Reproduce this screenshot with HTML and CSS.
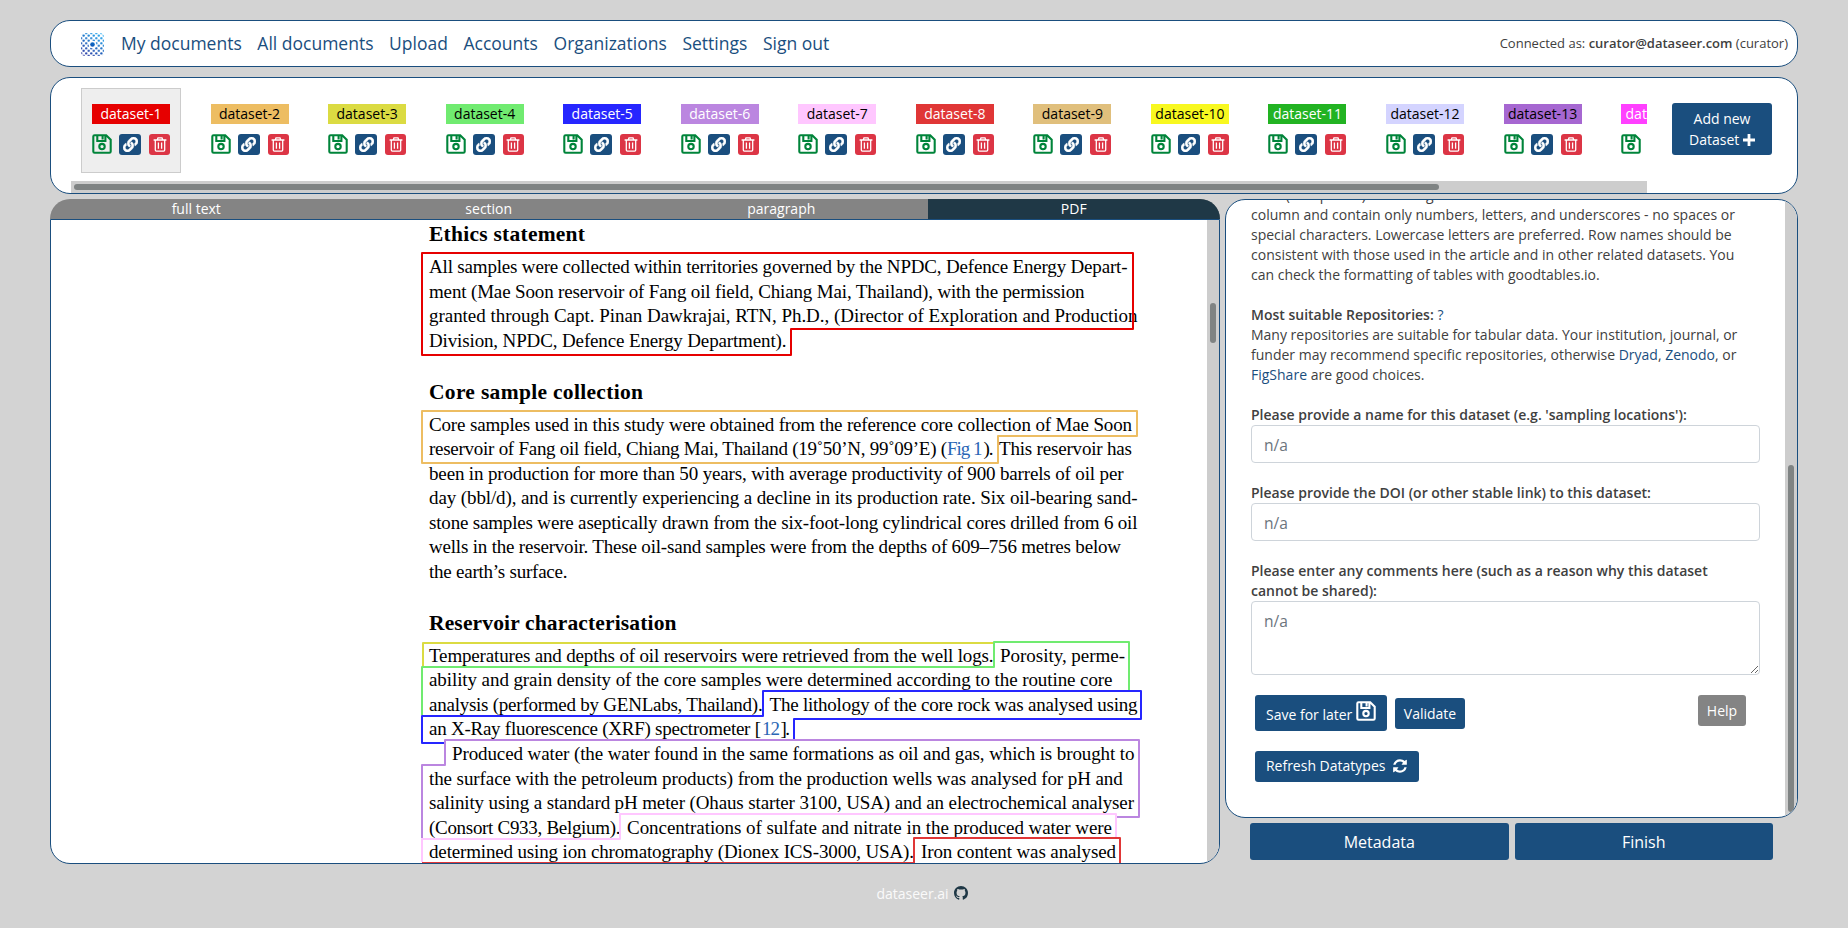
FILE: index.html
```html
<!DOCTYPE html>
<html lang="en">
<head>
<meta charset="utf-8">
<title>DataSeer</title>
<link rel="stylesheet" href="styles.css">
</head>
<body>
<svg class="defs" width="0" height="0" aria-hidden="true">
  <symbol id="save" viewBox="0 0 20 20"><path d="M2.600 1.300H14.200L18.700 5.800V17.400Q18.700 18.700 17.400 18.700H2.600Q1.300 18.700 1.300 17.400V2.600Q1.300 1.300 2.600 1.300ZM5.300 1.500V7H13.400V1.500M10.600 2V5.500" fill="none" stroke="currentColor" stroke-width="2.100"/><circle cx="10" cy="12.600" r="2.700" fill="none" stroke="currentColor" stroke-width="2.100"/></symbol>
  <symbol id="link" viewBox="0 0 512 512"><path fill="currentColor" stroke="currentColor" stroke-width="14" d="M326.612 185.391c59.747 59.809 58.927 155.698.36 214.590-.11.12-.24.25-.36.37l-67.200 67.200c-59.270 59.270-155.699 59.262-214.960 0-59.270-59.260-59.270-155.700 0-214.960l37.106-37.106c9.840-9.840 26.786-3.300 27.294 10.606.648 17.722 3.826 35.527 9.690 52.721 1.986 5.822.567 12.262-3.783 16.612l-13.087 13.087c-28.026 28.026-28.905 73.660-1.155 101.960 28.024 28.579 74.086 28.749 102.325.51l67.200-67.190c28.191-28.191 28.073-73.757 0-101.830-3.701-3.694-7.429-6.564-10.341-8.569a16.037 16.037 0 0 1-6.947-12.606c-.396-10.567 3.348-21.456 11.698-29.806l21.054-21.055c5.521-5.521 14.182-6.199 20.584-1.731a152.482 152.482 0 0 1 20.522 17.197zM467.547 44.449c-59.261-59.262-155.690-59.270-214.960 0l-67.200 67.200c-.12.12-.25.25-.36.37-58.566 58.892-59.387 154.781.36 214.590a152.454 152.454 0 0 0 20.521 17.196c6.402 4.468 15.064 3.789 20.584-1.731l21.054-21.055c8.350-8.350 12.094-19.239 11.698-29.806a16.037 16.037 0 0 0-6.947-12.606c-2.912-2.005-6.640-4.875-10.341-8.569-28.073-28.073-28.191-73.639 0-101.830l67.200-67.190c28.239-28.239 74.300-28.069 102.325.51 27.750 28.300 26.872 73.934-1.155 101.960l-13.087 13.087c-4.350 4.350-5.769 10.790-3.783 16.612 5.864 17.194 9.042 34.999 9.690 52.721.509 13.906 17.454 20.446 27.294 10.606l37.106-37.106c59.271-59.259 59.271-155.699.001-214.959z"/></symbol>
  <symbol id="trash" viewBox="0 0 14 15"><path d="M.6 3H13.400M4.300 2.800L5 .8H9L9.700 2.800M2.300 3V13Q2.300 14.100 3.400 14.100H10.600Q11.700 14.100 11.700 13V3M5.400 5.400V11.800M8.600 5.400V11.800" fill="none" stroke="currentColor" stroke-width="1.300"/></symbol>
  <symbol id="refresh" viewBox="0 0 1792 1792"><path fill="currentColor" d="M1639 1056q0 5-1 7-64 268-268 434.500t-478 166.500q-146 0-282.500-55t-243.500-157l-129 129q-19 19-45 19t-45-19-19-45v-448q0-26 19-45t45-19h448q26 0 45 19t19 45-19 45l-137 137q71 66 161 102t187 36q134 0 250-65t186-179q11-17 53-117 8-23 30-23h192q13 0 22.500 9.500t9.500 22.500zm25-800v448q0 26-19 45t-45 19h-448q-26 0-45-19t-19-45 19-45l138-138q-148-137-349-137-134 0-250 65t-186 179q-11 17-53 117-8 23-30 23h-199q-13 0-22.500-9.500t-9.500-22.500v-7q65-268 270-434.500t480-166.500q146 0 284 55.500t245 156.500l130-129q19-19 45-19t45 19 19 45z"/></symbol>
</svg>

<header class="panel nav">
  <svg class="logo" viewBox="0 0 24 24">
    <defs>
      <linearGradient id="lg" x1="0.2" y1="1" x2="0.8" y2="0"><stop offset="0" stop-color="#16249a"/><stop offset=".5" stop-color="#0c60bd"/><stop offset="1" stop-color="#10a2f0"/></linearGradient>
      <pattern id="dots" x="-1.200" y="-1.200" width="5.280" height="5.280" patternUnits="userSpaceOnUse"><circle cx="1.320" cy="1.320" r="1.200" fill="#fff"/><circle cx="3.960" cy="3.960" r="1.200" fill="#fff"/></pattern>
      <mask id="dm"><rect width="24" height="24" rx="4" fill="url(#dots)"/><circle cx="12" cy="12" r="4" fill="#000"/><circle cx="12" cy="12" r="2.400" fill="#fff"/></mask>
    </defs>
    <rect width="24" height="24" rx="4" fill="url(#lg)" mask="url(#dm)"/>
  </svg>
  <nav class="menu"><a>My documents</a><a>All documents</a><a>Upload</a><a>Accounts</a><a>Organizations</a><a>Settings</a><a>Sign out</a></nav>
  <div class="who">Connected as: <b>curator@dataseer.com</b> (curator)</div>
</header>

<section class="panel datasets">
  <div class="strip">
    <div class="cells">
      <div class="cell active"><span class="tag c1">dataset-1</span><div class="acts"><svg class="save"><use href="#save"/></svg><i class="lk"><svg><use href="#link"/></svg></i><i class="tr"><svg><use href="#trash"/></svg></i></div></div>
      <div class="cell"><span class="tag c2">dataset-2</span><div class="acts"><svg class="save"><use href="#save"/></svg><i class="lk"><svg><use href="#link"/></svg></i><i class="tr"><svg><use href="#trash"/></svg></i></div></div>
      <div class="cell"><span class="tag c3">dataset-3</span><div class="acts"><svg class="save"><use href="#save"/></svg><i class="lk"><svg><use href="#link"/></svg></i><i class="tr"><svg><use href="#trash"/></svg></i></div></div>
      <div class="cell"><span class="tag c4">dataset-4</span><div class="acts"><svg class="save"><use href="#save"/></svg><i class="lk"><svg><use href="#link"/></svg></i><i class="tr"><svg><use href="#trash"/></svg></i></div></div>
      <div class="cell"><span class="tag c5">dataset-5</span><div class="acts"><svg class="save"><use href="#save"/></svg><i class="lk"><svg><use href="#link"/></svg></i><i class="tr"><svg><use href="#trash"/></svg></i></div></div>
      <div class="cell"><span class="tag c6">dataset-6</span><div class="acts"><svg class="save"><use href="#save"/></svg><i class="lk"><svg><use href="#link"/></svg></i><i class="tr"><svg><use href="#trash"/></svg></i></div></div>
      <div class="cell"><span class="tag c7">dataset-7</span><div class="acts"><svg class="save"><use href="#save"/></svg><i class="lk"><svg><use href="#link"/></svg></i><i class="tr"><svg><use href="#trash"/></svg></i></div></div>
      <div class="cell"><span class="tag c8">dataset-8</span><div class="acts"><svg class="save"><use href="#save"/></svg><i class="lk"><svg><use href="#link"/></svg></i><i class="tr"><svg><use href="#trash"/></svg></i></div></div>
      <div class="cell"><span class="tag c9">dataset-9</span><div class="acts"><svg class="save"><use href="#save"/></svg><i class="lk"><svg><use href="#link"/></svg></i><i class="tr"><svg><use href="#trash"/></svg></i></div></div>
      <div class="cell"><span class="tag c10">dataset-10</span><div class="acts"><svg class="save"><use href="#save"/></svg><i class="lk"><svg><use href="#link"/></svg></i><i class="tr"><svg><use href="#trash"/></svg></i></div></div>
      <div class="cell"><span class="tag c11">dataset-11</span><div class="acts"><svg class="save"><use href="#save"/></svg><i class="lk"><svg><use href="#link"/></svg></i><i class="tr"><svg><use href="#trash"/></svg></i></div></div>
      <div class="cell"><span class="tag c12">dataset-12</span><div class="acts"><svg class="save"><use href="#save"/></svg><i class="lk"><svg><use href="#link"/></svg></i><i class="tr"><svg><use href="#trash"/></svg></i></div></div>
      <div class="cell"><span class="tag c13">dataset-13</span><div class="acts"><svg class="save"><use href="#save"/></svg><i class="lk"><svg><use href="#link"/></svg></i><i class="tr"><svg><use href="#trash"/></svg></i></div></div>
      <div class="cell"><span class="tag c14">dataset-14</span><div class="acts"><svg class="save"><use href="#save"/></svg><i class="lk"><svg><use href="#link"/></svg></i><i class="tr"><svg><use href="#trash"/></svg></i></div></div>
    </div>
    <div class="hbar"><div class="hthumb"></div></div>
  </div>
  <button class="btn add">Add new<br>Dataset <svg viewBox="0 0 12 12"><path d="M6 0V12M0 6H12" stroke="#fff" stroke-width="2.800"/></svg></button>
</section>

<main class="work">
  <section class="doc">
    <div class="tabs"><span>full text</span><span>section</span><span>paragraph</span><span class="on">PDF</span></div>
    <div class="page">
      <svg class="pdf" width="1156" height="643" viewBox="51 220 1156 643">
        <g class="body">
          <text class="h" x="429" y="241" textLength="156">Ethics statement</text>
          <text x="429" y="273.300" textLength="698.500">All samples were collected within territories governed by the NPDC, Defence Energy Depart-</text>
          <text x="429" y="298" textLength="655.500">ment (Mae Soon reservoir of Fang oil field, Chiang Mai, Thailand), with the permission</text>
          <text x="429" y="322.300" textLength="708.500">granted through Capt. Pinan Dawkrajai, RTN, Ph.D., (Director of Exploration and Production</text>
          <text x="429" y="347.200" textLength="357.500">Division, NPDC, Defence Energy Department).</text>
          <text class="h" x="429" y="399" textLength="214">Core sample collection</text>
          <text x="429" y="431.300" textLength="703">Core samples used in this study were obtained from the reference core collection of Mae Soon</text>
          <text x="429" y="455.300" textLength="518">reservoir of Fang oil field, Chiang Mai, Thailand (19˚50’N, 99˚09’E) (</text>
          <text class="ref" x="947" y="455.300" textLength="35.500">Fig 1</text>
          <text x="983.500" y="455.300" textLength="10">).</text>
          <text x="999" y="455.300" textLength="133">This reservoir has</text>
          <text x="429" y="480.300" textLength="694.500">been in production for more than 50 years, with average productivity of 900 barrels of oil per</text>
          <text x="429" y="504.300" textLength="708.500">day (bbl/d), and is currently experiencing a decline in its production rate. Six oil-bearing sand-</text>
          <text x="429" y="529" textLength="708.500">stone samples were aseptically drawn from the six-foot-long cylindrical cores drilled from 6 oil</text>
          <text x="429" y="553.300" textLength="692">wells in the reservoir. These oil-sand samples were from the depths of 609–756 metres below</text>
          <text x="429" y="578.300" textLength="138.500">the earth’s surface.</text>
          <text class="h" x="429" y="630" textLength="247.500">Reservoir characterisation</text>
          <text x="429" y="662.300" textLength="564.500">Temperatures and depths of oil reservoirs were retrieved from the well logs.</text>
          <text x="1000" y="662.300" textLength="125">Porosity, perme-</text>
          <text x="429" y="686.400" textLength="683.500">ability and grain density of the core samples were determined according to the routine core</text>
          <text x="429" y="711" textLength="333.700">analysis (performed by GENLabs, Thailand).</text>
          <text x="769.500" y="711" textLength="368">The lithology of the core rock was analysed using</text>
          <text x="429" y="735.300" textLength="332">an X-Ray fluorescence (XRF) spectrometer [</text>
          <text class="ref" x="762" y="735.300" textLength="18">12</text>
          <text x="780.500" y="735.300" textLength="9.500">].</text>
          <text x="452" y="760.300" textLength="682.500">Produced water (the water found in the same formations as oil and gas, which is brought to</text>
          <text x="429" y="785" textLength="693.700">the surface with the petroleum products) from the production wells was analysed for pH and</text>
          <text x="429" y="809.300" textLength="705">salinity using a standard pH meter (Ohaus starter 3100, USA) and an electrochemical analyser</text>
          <text x="429" y="834.300" textLength="191.500">(Consort C933, Belgium).</text>
          <text x="627" y="834.300" textLength="485">Concentrations of sulfate and nitrate in the produced water were</text>
          <text x="429" y="858.300" textLength="485">determined using ion chromatography (Dionex ICS-3000, USA).</text>
          <text x="921" y="858.300" textLength="195">Iron content was analysed</text>
        </g>
        <g class="marks">
          <path stroke="#e60000" d="M422 253H1133V329H791V355H422Z"/>
          <path stroke="#edbd62" d="M422 411H1137V436H998V463H422Z"/>
          <path stroke="#dbdb42" d="M423 667V643H994"/>
          <path stroke="#70eb70" d="M422 715V667H994V642H1129V691"/>
          <path stroke="#2626ff" d="M445 743H422V716H763V691H1141V719H794V739"/>
          <path stroke="#bb86e0" d="M422 838V765H445V740H1139V817H1116"/>
          <path stroke="#ffc7ff" d="M422 862V839H620V814H1116V838"/>
          <path stroke="#e03636" d="M422 863H914V838H1120V864"/>
        </g>
      </svg>
      <div class="vbar"><div class="vthumb"></div></div>
    </div>
  </section>

  <aside class="side">
    <div class="panel form">
      <div class="fields">
        <p class="txt">have (at top level) a heading for each<br>column and contain only numbers, letters, and underscores - no spaces or<br>special characters. Lowercase letters are preferred. Row names should be<br>consistent with those used in the article and in other related datasets. You<br>can check the formatting of tables with goodtables.io.</p>
        <p class="txt gap"><b>Most suitable Repositories:</b>&nbsp;<a class="q">?</a><br>Many repositories are suitable for tabular data. Your institution, journal, or<br>funder may recommend specific repositories, otherwise <a>Dryad</a>, <a>Zenodo</a>, or<br><a>FigShare</a> are good choices.</p>
        <label class="txt gap"><b>Please provide a name for this dataset (e.g. 'sampling locations'):</b></label>
        <input class="inp" placeholder="n/a">
        <label class="txt gap"><b>Please provide the DOI (or other stable link) to this dataset:</b></label>
        <input class="inp" placeholder="n/a">
        <label class="txt gap"><b>Please enter any comments here (such as a reason why this dataset<br>cannot be shared):</b></label>
        <textarea class="inp area" placeholder="n/a"></textarea>
        <div class="row">
          <button class="btn later">Save for later <svg><use href="#save"/></svg></button>
          <button class="btn valid">Validate</button>
          <button class="btn help">Help</button>
        </div>
        <button class="btn refresh">Refresh Datatypes <svg><use href="#refresh"/></svg></button>
      </div>
      <div class="vbar"><div class="vthumb"></div></div>
    </div>
    <div class="foot"><button class="btn big">Metadata</button><button class="btn big">Finish</button></div>
  </aside>
</main>

<footer class="credit">dataseer.ai <svg viewBox="0 0 16 16"><path fill="#1f3846" d="M8 0C3.580 0 0 3.580 0 8c0 3.540 2.290 6.530 5.470 7.590.4.070.55-.17.55-.38 0-.19-.01-.82-.01-1.490-2.010.37-2.530-.49-2.690-.94-.09-.23-.48-.94-.82-1.130-.28-.15-.68-.52-.01-.53.63-.01 1.080.58 1.230.82.72 1.210 1.870.87 2.330.66.07-.52.28-.87.51-1.070-1.780-.2-3.640-.89-3.640-3.950 0-.87.31-1.590.82-2.150-.08-.2-.36-1.020.08-2.120 0 0 .67-.21 2.200.82.64-.18 1.320-.27 2-.27s1.360.09 2 .27c1.530-1.040 2.200-.82 2.200-.82.44 1.100.16 1.920.08 2.120.51.56.82 1.270.82 2.150 0 3.070-1.870 3.750-3.650 3.950.29.25.54.73.54 1.480 0 1.070-.01 1.930-.01 2.200 0 .21.15.46.55.38A8.010 8.010 0 0 0 16 8c0-4.420-3.580-8-8-8z"/></svg></footer>
</body>
</html>
```
FILE: styles.css
```css
* { box-sizing: border-box; }
body {
  margin: 0;
  width: 1848px;
  height: 928px;
  padding: 20px 50px 0;
  background: #d3d3d3;
  color: #404040;
  font-family: "Open Sans", sans-serif;
  font-size: 14px;
  overflow: hidden;
}
b { font-weight: 600; }
.defs { position: absolute; }
.panel {
  background: #fff;
  border: 1px solid #1a4e7e;
  border-radius: 20px;
  overflow: hidden;
}
.btn {
  border: 0;
  border-radius: 3px;
  padding: 0;
  background: #1a4e7e;
  color: #fff;
  font-family: inherit;
  font-size: 14px;
}

/* Navigation */
.nav { display: flex; align-items: center; height: 47px; padding: 0 9px 1px 30px; }
.logo { width: 23px; height: 23px; margin-top: 3px; }
.menu { display: flex; gap: 15.600px; margin-left: 17px; font-size: 17.500px; color: #1a4e7e; }
.who { margin-left: auto; font-size: 13px; }

/* Dataset strip */
.datasets { display: flex; height: 117px; margin-top: 10px; padding-left: 20px; }
.strip { width: 1576px; overflow: hidden; }
.cells { display: flex; gap: 17.550px; height: 103px; padding: 10px 0 0 10px; }
.cell { flex: none; width: 100px; height: 85px; padding: 15px 10px 0; border: 1px solid transparent; }
.cell.active { background: #eee; border-color: #ccc; margin-right: 1px; }
.tag { display: block; height: 20px; line-height: 19px; text-align: center; color: #000; }
.c1 { background: #e60000; color: #fff; }
.c2 { background: #edbd62; }
.c3 { background: #dbdb42; }
.c4 { background: #70eb70; }
.c5 { background: #2626ff; color: #fff; }
.c6 { background: #bb86e0; color: #fff; }
.c7 { background: #ffc7ff; }
.c8 { background: #e03636; color: #fff; }
.c9 { background: #e0bf7c; }
.c10 { background: #f8f820; }
.c11 { background: #22b322; color: #fff; }
.c12 { background: #d4d4ff; }
.c13 { background: #a667d1; }
.c14 { background: #ff40ff; color: #fff; }
.acts { display: flex; justify-content: space-between; margin-top: 10px; }
.save { width: 20px; height: 20px; color: #00843a; }
.lk, .tr { display: flex; align-items: center; justify-content: center; height: 21px; border-radius: 3px; color: #fff; }
.lk { width: 22px; background: #1a4e7e; margin-left: 2px; }
.tr { width: 21px; background: #dc3545; margin-left: 3px; }
.lk svg { width: 15px; height: 15px; }
.tr svg { width: 14px; height: 15px; }
.hbar { height: 12px; padding: 3px; background: #cdcdcd; }
.hthumb { width: 1365px; height: 6px; border-radius: 3px; background: #7f8383; }
.add { width: 100px; height: 52px; margin: 25px 0 0 25px; line-height: 21px; }
.add svg { width: 12px; height: 12px; vertical-align: -1px; }

/* Work area */
.work { display: flex; gap: 5px; height: 665px; margin-top: 5px; }
.doc { display: flex; flex-direction: column; width: 1170px; }
.tabs { display: flex; height: 20px; border-radius: 20px 20px 0 0; overflow: hidden; background: #848484; }
.tabs span { flex: 1; color: #fff; text-align: center; line-height: 19px; }
.tabs .on { background: #1f3846; }
.page { display: flex; height: 645px; background: #fff; border: 1px solid #1a4e7e; border-radius: 0 0 20px 20px; overflow: hidden; }
.pdf { flex: none; }
.body { font-family: "Liberation Serif", serif; font-size: 19px; fill: #000; }
.h { font-weight: bold; font-size: 21.500px; }
.ref { fill: #2a66b5; }
.marks path { fill: none; stroke-width: 2; stroke-linejoin: round; }
.vbar { width: 12px; padding: 0 3px; background: #cdcdcd; }
.page .vthumb { height: 40px; margin-top: 83px; border-radius: 3px; background: #7f8383; }

/* Form */
.side { width: 573px; }
.form { display: flex; height: 618.500px; }
.fields { flex: 1; height: 616px; padding-left: 25px; overflow: hidden; }
.txt { display: block; margin: 0; line-height: 20px; white-space: nowrap; }
p.txt:first-child { margin-top: -15px; }
.txt a { color: #1a4e7e; }
.gap { margin-top: 20px; }
.inp { display: block; width: 509px; height: 38px; padding: 7px 12px 5px; border: 1px solid #ced4da; border-radius: 4px; font-family: inherit; font-size: 15.600px; line-height: 24px; }
.inp::placeholder { color: #6c757d; }
.area { height: 74px; }
.row { display: flex; align-items: flex-start; margin: 20px 0 0 4px; }
.later { width: 132px; height: 36px; padding-bottom: 2px; }
.later svg { width: 20px; height: 20px; vertical-align: -1px; }
.valid { width: 70px; height: 31px; margin: 3px 0 0 8px; padding-bottom: 1px; }
.help { width: 48px; height: 31px; margin-left: 233px; background: #848484; }
.refresh { width: 164px; height: 31px; margin: 20px 0 0 4px; padding-bottom: 2px; }
.refresh svg { width: 16px; height: 16px; margin-left: 3px; vertical-align: -3px; }
.form .vthumb { height: 347px; margin-top: 265px; border-radius: 3px; background: #7f8383; }
.foot { display: flex; gap: 6px; margin: 5px 0 0 25px; }
.big { width: 258.500px; height: 37px; padding-top: 1px; font-size: 16px; }

.credit { display: flex; justify-content: center; align-items: center; gap: 5px; height: 20px; margin-top: 19px; padding-right: 4px; color: #fafafa; }
.credit svg { width: 14px; height: 14px; }
```
